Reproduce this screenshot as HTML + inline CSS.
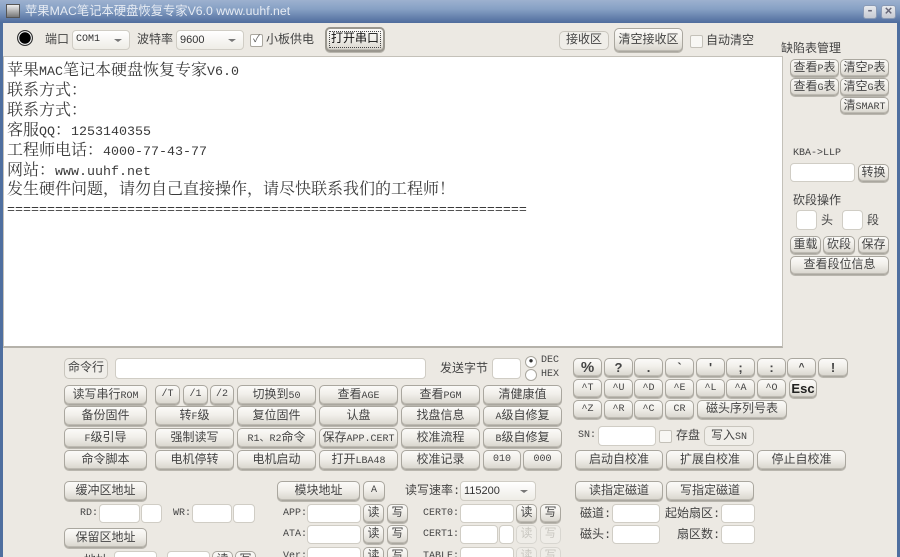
<!DOCTYPE html>
<html lang="zh"><head><meta charset="utf-8"><title>苹果MAC笔记本硬盘恢复专家V6.0</title>
<style>
html,body{margin:0;padding:0;background:#ece9e3}
#w{position:relative;width:900px;height:557px;overflow:hidden;background:#ece9e3;font-family:"Liberation Mono","Noto Sans CJK SC",monospace;font-size:12px;color:#333;filter:blur(.3px)}
#w div{position:absolute;box-sizing:border-box;white-space:nowrap}
.b{display:block;text-align:center;line-height:18px;border:1px solid #aaa79f;border-radius:5px;background:linear-gradient(#fbfaf8,#f1efea 45%,#d8d5cd);box-shadow:inset 0 -1px 0 #bdbab2,0 1px 0 #b9b6ae;font-size:12px;color:#444}
.m{line-height:16px}
.n{line-height:17px}
.k{display:flex;align-items:center;justify-content:center;line-height:1;font-family:"Liberation Sans",sans-serif;font-weight:bold;font-size:13px}
.f{background:#f0eee9;box-shadow:none;border-color:#c8c5bd}
.d{color:#c9c7c1;background:#efede8;box-shadow:none;border-color:#d8d6d0}
.i{background:#fff;border:1px solid #d0cdc5;border-radius:4px}
.t{line-height:16px;color:#444;font-size:12px}
.s{font-size:10px}
.c{background:#fff;border:1px solid #aaa79f;border-radius:2px}
.a{background:linear-gradient(#fff,#eeece6);border:1px solid #d0cdc5;border-radius:4px;padding-left:3px;font-size:10px;line-height:18px;color:#333}
.a i{position:absolute;right:7px;top:8px;width:0;height:0;border:4px solid transparent;border-top:3px solid #777;border-bottom:0}
#x{left:3px;top:56px;width:780px;height:292px;background:#fff;border:1px solid #c4c1b9;border-bottom:2px solid #b5b2aa;font-family:"Noto Serif CJK SC","Liberation Serif",serif;font-size:16px;color:#3a3a3a}
#x div{left:3px;line-height:20px;height:20px}
#x span{font-family:"Liberation Mono",monospace;font-size:13.33px}
</style></head><body><div id="w">

<div style="left:0;top:0;width:900px;height:23px;background:linear-gradient(#9db1cf,#86a0c4 40%,#4f6c9d)"></div>
<div style="left:0;top:22px;width:3px;height:535px;background:#4f6f9f"></div>
<div style="left:897px;top:22px;width:3px;height:535px;background:#4f6f9f"></div>
<div style="left:6px;top:4px;width:14px;height:14px;background:linear-gradient(#eee,#777);border:1px solid #555"></div>
<div style="left:25px;top:3px;line-height:16px;font-family:'Liberation Sans','Noto Sans CJK SC',sans-serif;font-size:12.3px;color:#e6ebf3">苹果MAC笔记本硬盘恢复专家V6.0 www.uuhf.net</div>
<div style="left:863px;top:5px;width:14px;height:14px;border-radius:3px;background:linear-gradient(#e8eaee,#c6cad2);border:1px solid #8a9ab5;color:#667;line-height:10px;text-align:center;font-size:13px;font-weight:bold">-</div>
<div style="left:881px;top:5px;width:15px;height:14px;border-radius:3px;background:linear-gradient(#e8eaee,#c6cad2);border:1px solid #8a9ab5;color:#667;line-height:11px;text-align:center;font-size:13px;font-weight:bold">×</div>

<div style="left:17px;top:30px;width:16px;height:16px;border-radius:50%;background:radial-gradient(circle,#000 0 5.5px,#fff 6px 6.6px,#333 7px)"></div>
<div class="t" style="left:45px;top:32px">端口</div>
<div class="a" style="left:72px;top:30px;width:58px;height:20px">COM1<i></i></div>
<div class="t" style="left:137px;top:32px">波特率</div>
<div class="a" style="left:176px;top:30px;width:68px;height:20px;font-family:'Liberation Sans',sans-serif;font-size:11px">9600<i></i></div>
<div class="c" style="left:250px;top:34px;width:13px;height:13px;font-size:10px;line-height:11px;text-align:center;color:#555">✓</div>
<div class="t" style="left:266px;top:32px">小板供电</div>
<div class="b" style="left:325px;top:27px;width:60px;height:25px;border:2px solid #9a978f;color:#111;outline:1px dotted #444;outline-offset:-5px;line-height:21px">打开串口</div>
<div class="b f n" style="left:559px;top:31px;width:50px;height:19px">接收区</div>
<div class="b" style="left:614px;top:28px;width:69px;height:24px;line-height:22px">清空接收区</div>
<div class="c" style="left:690px;top:35px;width:13px;height:13px;background:#f8f7f4;border-color:#c4c1b9"></div>
<div class="t" style="left:706px;top:33px">自动清空</div>

<div id="x">
<div style="top:2px">苹果<span>MAC</span>笔记本硬盘恢复专家<span>V6.0</span></div>
<div style="top:22px">联系方式：</div>
<div style="top:42px">联系方式：</div>
<div style="top:62px">客服<span>QQ</span>：<span>1253140355</span></div>
<div style="top:82px">工程师电话：<span>4000-77-43-77</span></div>
<div style="top:102px">网站：<span>www.uuhf.net</span></div>
<div style="top:121px">发生硬件问题，请勿自己直接操作，请尽快联系我们的工程师！</div>
<div style="top:140px"><span>=================================================================</span></div>
</div>

<div class="t" style="left:781px;top:41px">缺陷表管理</div>
<div class="b m" style="left:790px;top:59px;width:49px;height:18px">查看<span class="s">P</span>表</div>
<div class="b m" style="left:840px;top:59px;width:49px;height:18px">清空<span class="s">P</span>表</div>
<div class="b m" style="left:790px;top:78px;width:49px;height:18px">查看<span class="s">G</span>表</div>
<div class="b m" style="left:840px;top:78px;width:49px;height:18px">清空<span class="s">G</span>表</div>
<div class="b m" style="left:840px;top:97px;width:49px;height:17px">清<span class="s">SMART</span></div>
<div class="t s" style="left:793px;top:146px;font-size:10px">KBA-&gt;LLP</div>
<div class="i" style="left:790px;top:163px;width:65px;height:19px"></div>
<div class="b m" style="left:858px;top:164px;width:31px;height:18px">转换</div>
<div class="t" style="left:793px;top:193px">砍段操作</div>
<div class="i" style="left:796px;top:210px;width:21px;height:20px"></div>
<div class="t" style="left:821px;top:213px">头</div>
<div class="i" style="left:842px;top:210px;width:21px;height:20px"></div>
<div class="t" style="left:867px;top:213px">段</div>
<div class="b m" style="left:790px;top:236px;width:31px;height:18px">重载</div>
<div class="b m" style="left:823px;top:236px;width:32px;height:18px">砍段</div>
<div class="b m" style="left:858px;top:236px;width:31px;height:18px">保存</div>
<div class="b n" style="left:790px;top:256px;width:99px;height:19px">查看段位信息</div>

<div class="b f" style="left:64px;top:358px;width:44px;height:21px">命令行</div>
<div class="i" style="left:115px;top:358px;width:311px;height:21px"></div>
<div class="t" style="left:440px;top:361px">发送字节</div>
<div class="i" style="left:492px;top:358px;width:29px;height:21px"></div>
<div class="c" style="left:525px;top:356px;width:12px;height:12px;border-radius:50%;font-size:8px;line-height:10px;text-align:center">●</div>
<div class="c" style="left:525px;top:369px;width:12px;height:12px;border-radius:50%"></div>
<div class="t s" style="left:541px;top:353px;font-size:10px">DEC</div>
<div class="t s" style="left:541px;top:367px;font-size:10px">HEX</div>

<div class="b" style="left:64px;top:385px;width:83px;height:20px">读写串行<span class="s">ROM</span></div>
<div class="b s" style="left:155px;top:385px;width:25px;height:20px">/T</div>
<div class="b s" style="left:183px;top:385px;width:25px;height:20px">/1</div>
<div class="b s" style="left:210px;top:385px;width:24px;height:20px">/2</div>
<div class="b" style="left:237px;top:385px;width:79px;height:20px">切换到<span class="s">50</span></div>
<div class="b" style="left:319px;top:385px;width:79px;height:20px">查看<span class="s">AGE</span></div>
<div class="b" style="left:401px;top:385px;width:79px;height:20px">查看<span class="s">PGM</span></div>
<div class="b" style="left:483px;top:385px;width:79px;height:20px">清健康值</div>

<div class="b" style="left:64px;top:406px;width:83px;height:20px">备份固件</div>
<div class="b" style="left:155px;top:406px;width:79px;height:20px">转<span class="s">F</span>级</div>
<div class="b" style="left:237px;top:406px;width:79px;height:20px">复位固件</div>
<div class="b" style="left:319px;top:406px;width:79px;height:20px">认盘</div>
<div class="b" style="left:401px;top:406px;width:79px;height:20px">找盘信息</div>
<div class="b" style="left:483px;top:406px;width:79px;height:20px"><span class="s">A</span>级自修复</div>

<div class="b" style="left:64px;top:428px;width:83px;height:20px"><span class="s">F</span>级引导</div>
<div class="b" style="left:155px;top:428px;width:79px;height:20px">强制读写</div>
<div class="b" style="left:237px;top:428px;width:79px;height:20px"><span class="s">R1、R2</span>命令</div>
<div class="b" style="left:319px;top:428px;width:79px;height:20px">保存<span class="s">APP.CERT</span></div>
<div class="b" style="left:401px;top:428px;width:79px;height:20px">校准流程</div>
<div class="b" style="left:483px;top:428px;width:79px;height:20px"><span class="s">B</span>级自修复</div>

<div class="b" style="left:64px;top:450px;width:83px;height:20px">命令脚本</div>
<div class="b" style="left:155px;top:450px;width:79px;height:20px">电机停转</div>
<div class="b" style="left:237px;top:450px;width:79px;height:20px">电机启动</div>
<div class="b" style="left:319px;top:450px;width:79px;height:20px">打开<span class="s">LBA48</span></div>
<div class="b" style="left:401px;top:450px;width:79px;height:20px">校准记录</div>
<div class="b s" style="left:483px;top:450px;width:38px;height:20px">010</div>
<div class="b s" style="left:523px;top:450px;width:39px;height:20px">000</div>

<div class="b k" style="left:573px;top:358px;width:29px;height:19px;font-size:15px">%</div>
<div class="b k" style="left:604px;top:358px;width:29px;height:19px">?</div>
<div class="b k" style="left:634px;top:358px;width:29px;height:19px">.</div>
<div class="b k" style="left:665px;top:358px;width:29px;height:19px">`</div>
<div class="b k" style="left:696px;top:358px;width:29px;height:19px">'</div>
<div class="b k" style="left:726px;top:358px;width:29px;height:19px">;</div>
<div class="b k" style="left:757px;top:358px;width:29px;height:19px">:</div>
<div class="b k" style="left:787px;top:358px;width:29px;height:19px;font-size:10px">^</div>
<div class="b k" style="left:818px;top:358px;width:30px;height:19px">!</div>

<div class="b s n" style="left:573px;top:379px;width:29px;height:19px">^T</div>
<div class="b s n" style="left:604px;top:379px;width:29px;height:19px">^U</div>
<div class="b s n" style="left:634px;top:379px;width:29px;height:19px">^D</div>
<div class="b s n" style="left:665px;top:379px;width:29px;height:19px">^E</div>
<div class="b s n" style="left:696px;top:379px;width:29px;height:19px">^L</div>
<div class="b s n" style="left:726px;top:379px;width:29px;height:19px">^A</div>
<div class="b s n" style="left:757px;top:379px;width:29px;height:19px">^O</div>
<div class="b k" style="left:789px;top:379px;width:28px;height:19px;color:#222">Esc</div>

<div class="b s n" style="left:573px;top:400px;width:29px;height:19px">^Z</div>
<div class="b s n" style="left:604px;top:400px;width:29px;height:19px">^R</div>
<div class="b s n" style="left:634px;top:400px;width:29px;height:19px">^C</div>
<div class="b s n" style="left:665px;top:400px;width:29px;height:19px">CR</div>
<div class="b n" style="left:697px;top:400px;width:90px;height:19px">磁头序列号表</div>

<div class="t s" style="left:578px;top:428px;font-size:10px">SN:</div>
<div class="i" style="left:598px;top:426px;width:58px;height:20px"></div>
<div class="c" style="left:659px;top:430px;width:13px;height:13px;background:#f8f7f4;border-color:#c4c1b9"></div>
<div class="t" style="left:676px;top:428px">存盘</div>
<div class="b f" style="left:704px;top:426px;width:50px;height:20px">写入<span class="s">SN</span></div>

<div class="b" style="left:575px;top:450px;width:88px;height:20px">启动自校准</div>
<div class="b" style="left:666px;top:450px;width:88px;height:20px">扩展自校准</div>
<div class="b" style="left:757px;top:450px;width:89px;height:20px">停止自校准</div>

<div class="b" style="left:64px;top:481px;width:83px;height:20px">缓冲区地址</div>
<div class="t s" style="left:80px;top:506px;font-size:10px">RD:</div>
<div class="i" style="left:99px;top:504px;width:41px;height:19px"></div>
<div class="i" style="left:141px;top:504px;width:21px;height:19px"></div>
<div class="t s" style="left:173px;top:506px;font-size:10px">WR:</div>
<div class="i" style="left:192px;top:504px;width:40px;height:19px"></div>
<div class="i" style="left:233px;top:504px;width:22px;height:19px"></div>
<div class="b" style="left:64px;top:528px;width:83px;height:20px">保留区地址</div>
<div class="t" style="left:84px;top:553px">地址:</div>
<div class="i" style="left:114px;top:551px;width:43px;height:19px"></div>
<div class="i" style="left:167px;top:551px;width:43px;height:19px"></div>
<div class="b n" style="left:212px;top:551px;width:21px;height:19px">读</div>
<div class="b n" style="left:235px;top:551px;width:21px;height:19px">写</div>

<div class="b" style="left:277px;top:481px;width:83px;height:20px">模块地址</div>
<div class="b s" style="left:363px;top:481px;width:22px;height:20px">A</div>
<div class="t" style="left:405px;top:483px">读写速率:</div>
<div class="a" style="left:460px;top:481px;width:76px;height:20px;font-family:'Liberation Sans',sans-serif;font-size:11px">115200<i></i></div>
<div class="t s" style="left:283px;top:506px;font-size:10px">APP:</div>
<div class="i" style="left:307px;top:504px;width:54px;height:19px"></div>
<div class="b n" style="left:363px;top:504px;width:21px;height:19px">读</div>
<div class="b n" style="left:387px;top:504px;width:21px;height:19px">写</div>
<div class="t s" style="left:283px;top:527px;font-size:10px">ATA:</div>
<div class="i" style="left:307px;top:525px;width:54px;height:19px"></div>
<div class="b n" style="left:363px;top:525px;width:21px;height:19px">读</div>
<div class="b n" style="left:387px;top:525px;width:21px;height:19px">写</div>
<div class="t s" style="left:283px;top:549px;font-size:10px">Ver:</div>
<div class="i" style="left:307px;top:547px;width:54px;height:19px"></div>
<div class="b n" style="left:363px;top:547px;width:21px;height:19px">读</div>
<div class="b n" style="left:387px;top:547px;width:21px;height:19px">写</div>

<div class="t s" style="left:423px;top:506px;font-size:10px">CERT0:</div>
<div class="i" style="left:460px;top:504px;width:54px;height:19px"></div>
<div class="b n" style="left:516px;top:504px;width:21px;height:19px">读</div>
<div class="b n" style="left:540px;top:504px;width:21px;height:19px">写</div>
<div class="t s" style="left:423px;top:527px;font-size:10px">CERT1:</div>
<div class="i" style="left:460px;top:525px;width:38px;height:19px"></div>
<div class="i" style="left:499px;top:525px;width:15px;height:19px"></div>
<div class="b d n" style="left:516px;top:525px;width:21px;height:19px">读</div>
<div class="b d n" style="left:540px;top:525px;width:21px;height:19px">写</div>
<div class="t s" style="left:423px;top:549px;font-size:10px">TABLE:</div>
<div class="i" style="left:460px;top:547px;width:54px;height:19px"></div>
<div class="b d n" style="left:516px;top:547px;width:21px;height:19px">读</div>
<div class="b d n" style="left:540px;top:547px;width:21px;height:19px">写</div>

<div class="b" style="left:575px;top:481px;width:88px;height:20px">读指定磁道</div>
<div class="b" style="left:666px;top:481px;width:88px;height:20px">写指定磁道</div>
<div class="t" style="left:580px;top:506px">磁道:</div>
<div class="i" style="left:612px;top:504px;width:48px;height:19px"></div>
<div class="t" style="left:665px;top:506px">起始扇区:</div>
<div class="i" style="left:721px;top:504px;width:34px;height:19px"></div>
<div class="t" style="left:580px;top:527px">磁头:</div>
<div class="i" style="left:612px;top:525px;width:48px;height:19px"></div>
<div class="t" style="left:677px;top:527px">扇区数:</div>
<div class="i" style="left:721px;top:525px;width:34px;height:19px"></div>

</div></body></html>
